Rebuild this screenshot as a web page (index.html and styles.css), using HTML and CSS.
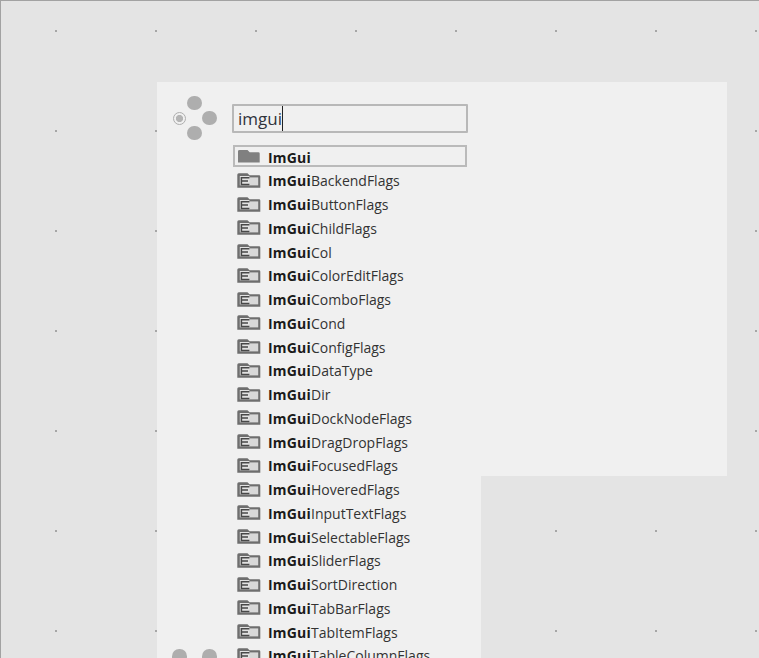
FILE: index.html
```html
<!DOCTYPE html>
<html lang="en">
<head>
<meta charset="utf-8">
<title>ImGui node search</title>
<link rel="stylesheet" href="styles.css">
</head>
<body>
<svg class="defs" width="0" height="0" aria-hidden="true">
  <symbol id="enum" viewBox="0 -1 24 18">
    <path d="M.3 1.8Q.3 .3 1.8 .3H10.5L12.5 2.3H22Q23.3 2.3 23.3 3.6V14.8H.3Z" fill="#6e6e6e"/>
    <rect x="12" y="4.4" width="9.2" height="8" fill="#d8d8d8"/>
    <rect x="2.8" y="3" width="9.6" height="9.4" fill="#e2e2e2"/>
    <path d="M12.4 4.7H4.4V11.4H12.4M4.4 8H11" fill="none" stroke="#484848" stroke-width="1.5"/>
  </symbol>
  <symbol id="folder" viewBox="0 -1 24 18">
    <path d="M1 3.2Q1 2 2.5 2H10.5L12.7 4.3H21.4Q22.7 4.3 22.7 5.6V14.5H1Z" fill="#808080"/>
  </symbol>
</svg>
<main class="canvas">
  <section class="node">
    <div class="column">
      <div class="gutter">
        <div class="dial">
          <span class="pin pin-top"></span>
          <span class="radio"></span>
          <span class="pin pin-right"></span>
          <span class="pin pin-bottom"></span>
        </div>
        <div class="dial-low">
          <span class="pin"></span>
          <span class="pin"></span>
        </div>
      </div>
      <div class="content">
        <div class="search"><span class="query">imgui</span><span class="caret"></span></div>
        <ul class="results">
          <li class="row row-selected"><svg class="icon"><use href="#folder"/></svg><span class="label"><b>ImGui</b></span></li>
          <li class="row"><svg class="icon"><use href="#enum"/></svg><span class="label"><b>ImGui</b>BackendFlags</span></li>
          <li class="row"><svg class="icon"><use href="#enum"/></svg><span class="label"><b>ImGui</b>ButtonFlags</span></li>
          <li class="row"><svg class="icon"><use href="#enum"/></svg><span class="label"><b>ImGui</b>ChildFlags</span></li>
          <li class="row"><svg class="icon"><use href="#enum"/></svg><span class="label"><b>ImGui</b>Col</span></li>
          <li class="row"><svg class="icon"><use href="#enum"/></svg><span class="label"><b>ImGui</b>ColorEditFlags</span></li>
          <li class="row"><svg class="icon"><use href="#enum"/></svg><span class="label"><b>ImGui</b>ComboFlags</span></li>
          <li class="row"><svg class="icon"><use href="#enum"/></svg><span class="label"><b>ImGui</b>Cond</span></li>
          <li class="row"><svg class="icon"><use href="#enum"/></svg><span class="label"><b>ImGui</b>ConfigFlags</span></li>
          <li class="row"><svg class="icon"><use href="#enum"/></svg><span class="label"><b>ImGui</b>DataType</span></li>
          <li class="row"><svg class="icon"><use href="#enum"/></svg><span class="label"><b>ImGui</b>Dir</span></li>
          <li class="row"><svg class="icon"><use href="#enum"/></svg><span class="label"><b>ImGui</b>DockNodeFlags</span></li>
          <li class="row"><svg class="icon"><use href="#enum"/></svg><span class="label"><b>ImGui</b>DragDropFlags</span></li>
          <li class="row"><svg class="icon"><use href="#enum"/></svg><span class="label"><b>ImGui</b>FocusedFlags</span></li>
          <li class="row"><svg class="icon"><use href="#enum"/></svg><span class="label"><b>ImGui</b>HoveredFlags</span></li>
          <li class="row"><svg class="icon"><use href="#enum"/></svg><span class="label"><b>ImGui</b>InputTextFlags</span></li>
          <li class="row"><svg class="icon"><use href="#enum"/></svg><span class="label"><b>ImGui</b>SelectableFlags</span></li>
          <li class="row"><svg class="icon"><use href="#enum"/></svg><span class="label"><b>ImGui</b>SliderFlags</span></li>
          <li class="row"><svg class="icon"><use href="#enum"/></svg><span class="label"><b>ImGui</b>SortDirection</span></li>
          <li class="row"><svg class="icon"><use href="#enum"/></svg><span class="label"><b>ImGui</b>TabBarFlags</span></li>
          <li class="row"><svg class="icon"><use href="#enum"/></svg><span class="label"><b>ImGui</b>TabItemFlags</span></li>
          <li class="row"><svg class="icon"><use href="#enum"/></svg><span class="label"><b>ImGui</b>TableColumnFlags</span></li>
        </ul>
      </div>
    </div>
    <div class="wing"></div>
  </section>
</main>
</body>
</html>
```
FILE: styles.css
```css
* { box-sizing: border-box; }
html, body { margin: 0; height: 100%; overflow: hidden; }
body { background: #e4e4e4; font-family: "Open Sans", "Liberation Sans", sans-serif; color: #333; }
.defs { display: block; height: 0; }
.canvas {
  height: 658px;
  overflow: hidden;
  padding: 81px 0 0 156px;
  border-top: 1px solid #a2a2a2;
  border-left: 1px solid #a2a2a2;
  background: radial-gradient(circle at 1px 1px, #a6a6a6 0 1px, transparent 1.1px) 54px 29px / 100px 100px #e4e4e4;
}
.node { display: flex; align-items: flex-start; width: 570px; }
.column { display: flex; width: 324px; background: #f0f0f0; }
.wing { width: 246px; height: 394px; background: #f0f0f0; }
.gutter { width: 75px; flex: none; padding: 13.5px 0 0 15px; }
.dial { display: grid; grid-template-columns: repeat(3, 15px); grid-auto-rows: 15px; width: 45px; place-items: center; }
.pin { display: block; width: 14.5px; height: 14.5px; border-radius: 50%; background: #aeaeae; }
.pin-top { grid-column: 2; grid-row: 1; }
.radio { grid-column: 1; grid-row: 2; width: 13px; height: 13px; border: 1px solid #aeaeae; border-radius: 50%; background: radial-gradient(circle, #b4b4b4 0 3.4px, transparent 3.8px); }
.pin-right { grid-column: 3; grid-row: 2; }
.pin-bottom { grid-column: 2; grid-row: 3; }
.dial-low { display: flex; gap: 15.5px; margin-top: 508.5px; }
.content { flex: 1; padding: 22px 13px 0 0; }
.search { display: flex; align-items: center; width: 236px; height: 29px; padding-left: 4px; border: 2px solid #b8b8b8; border-radius: 1px; font-size: 17px; color: #30343c; }
.caret { width: 1px; height: 25px; background: #222; }
.results { list-style: none; margin: 12px 0 0; padding: 0; width: 236px; }
.row { display: flex; align-items: center; height: 23.75px; padding-left: 5px; font-size: 14px; }
.row-selected { height: 22px; margin: 1px 0 2px 1px; width: 234px; padding-left: 2px; border: 2px solid #bababa; }
.row-selected .label { position: relative; top: 1px; }
.icon { width: 24px; height: 18px; flex: none; margin-right: 7px; }
.label { white-space: nowrap; }
.label b { font-weight: 700; color: #1a1a1a; letter-spacing: 0.2px; }
```
